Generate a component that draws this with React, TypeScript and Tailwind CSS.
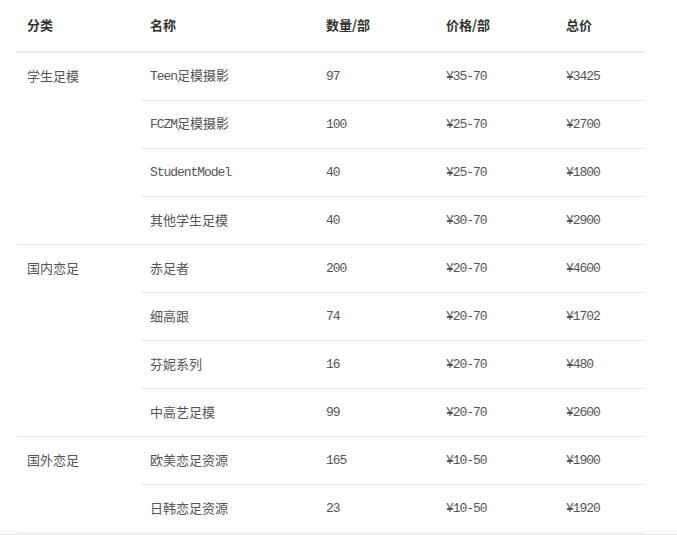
import React from 'react';

type Item = { name: string; qty: string; price: string; total: string };
type Group = { category: string; items: Item[] };

const groups: Group[] = [
  {
    category: '学生足模',
    items: [
      { name: 'Teen足模摄影', qty: '97', price: '¥35-70', total: '¥3425' },
      { name: 'FCZM足模摄影', qty: '100', price: '¥25-70', total: '¥2700' },
      { name: 'StudentModel', qty: '40', price: '¥25-70', total: '¥1800' },
      { name: '其他学生足模', qty: '40', price: '¥30-70', total: '¥2900' },
    ],
  },
  {
    category: '国内恋足',
    items: [
      { name: '赤足者', qty: '200', price: '¥20-70', total: '¥4600' },
      { name: '细高跟', qty: '74', price: '¥20-70', total: '¥1702' },
      { name: '芬妮系列', qty: '16', price: '¥20-70', total: '¥480' },
      { name: '中高艺足模', qty: '99', price: '¥20-70', total: '¥2600' },
    ],
  },
  {
    category: '国外恋足',
    items: [
      { name: '欧美恋足资源', qty: '165', price: '¥10-50', total: '¥1900' },
      { name: '日韩恋足资源', qty: '23', price: '¥10-50', total: '¥1920' },
    ],
  },
];

// latin runs in mono, cjk runs in sans
function Mixed({ text }: { text: string }) {
  const parts = text.match(/[\x00-\x7f¥]+|[^\x00-\x7f¥]+/g) || [];
  return (
    <>
      {parts.map((p, i) =>
        /^[\x00-\x7f¥]+$/.test(p) ? (
          <span key={i} className="font-['Liberation_Mono',monospace] tracking-[-1.05px]">
            {p}
          </span>
        ) : (
          <span key={i}>{p}</span>
        )
      )}
    </>
  );
}

export default function App() {
  return (
    <div className="w-[677px] h-[535px] bg-white border-b border-[#e4e4e4] overflow-hidden font-['Noto_Sans_CJK_SC',sans-serif]">
      <table className="ml-[17px] w-[628px] border-collapse text-[13px]">
        <colgroup>
          <col className="w-[123px]" />
          <col className="w-[176px]" />
          <col className="w-[120px]" />
          <col className="w-[120px]" />
          <col className="w-[89px]" />
        </colgroup>
        <thead>
          <tr className="h-[52px] border-b-2 border-[#ececec] text-[#333] font-bold text-left">
            <th className="pl-[10px] pb-[2px] font-bold">分类</th>
            <th className="pl-[10px] pb-[2px] font-bold">名称</th>
            <th className="pl-[10px] pb-[2px] font-bold">数量/部</th>
            <th className="pl-[10px] pb-[2px] font-bold">价格/部</th>
            <th className="pl-[10px] pb-[2px] font-bold">总价</th>
          </tr>
        </thead>
        <tbody className="text-[#555]">
          {groups.map((g) =>
            g.items.map((item, i) => (
              <tr key={g.category + i} className="h-[48px]">
                {i === 0 && (
                  <td
                    rowSpan={g.items.length}
                    className="pl-[10px] align-top pt-[13px] border-b border-[#e8e8e8]"
                  >
                    {g.category}
                  </td>
                )}
                <td className="pl-[10px] pb-[1px] border-b border-[#e8e8e8]">
                  <Mixed text={item.name} />
                </td>
                <td className="pl-[10px] pb-[1px] border-b border-[#e8e8e8]">
                  <Mixed text={item.qty} />
                </td>
                <td className="pl-[10px] pb-[1px] border-b border-[#e8e8e8]">
                  <Mixed text={item.price} />
                </td>
                <td className="pl-[10px] pb-[1px] border-b border-[#e8e8e8]">
                  <Mixed text={item.total} />
                </td>
              </tr>
            ))
          )}
        </tbody>
      </table>
    </div>
  );
}
